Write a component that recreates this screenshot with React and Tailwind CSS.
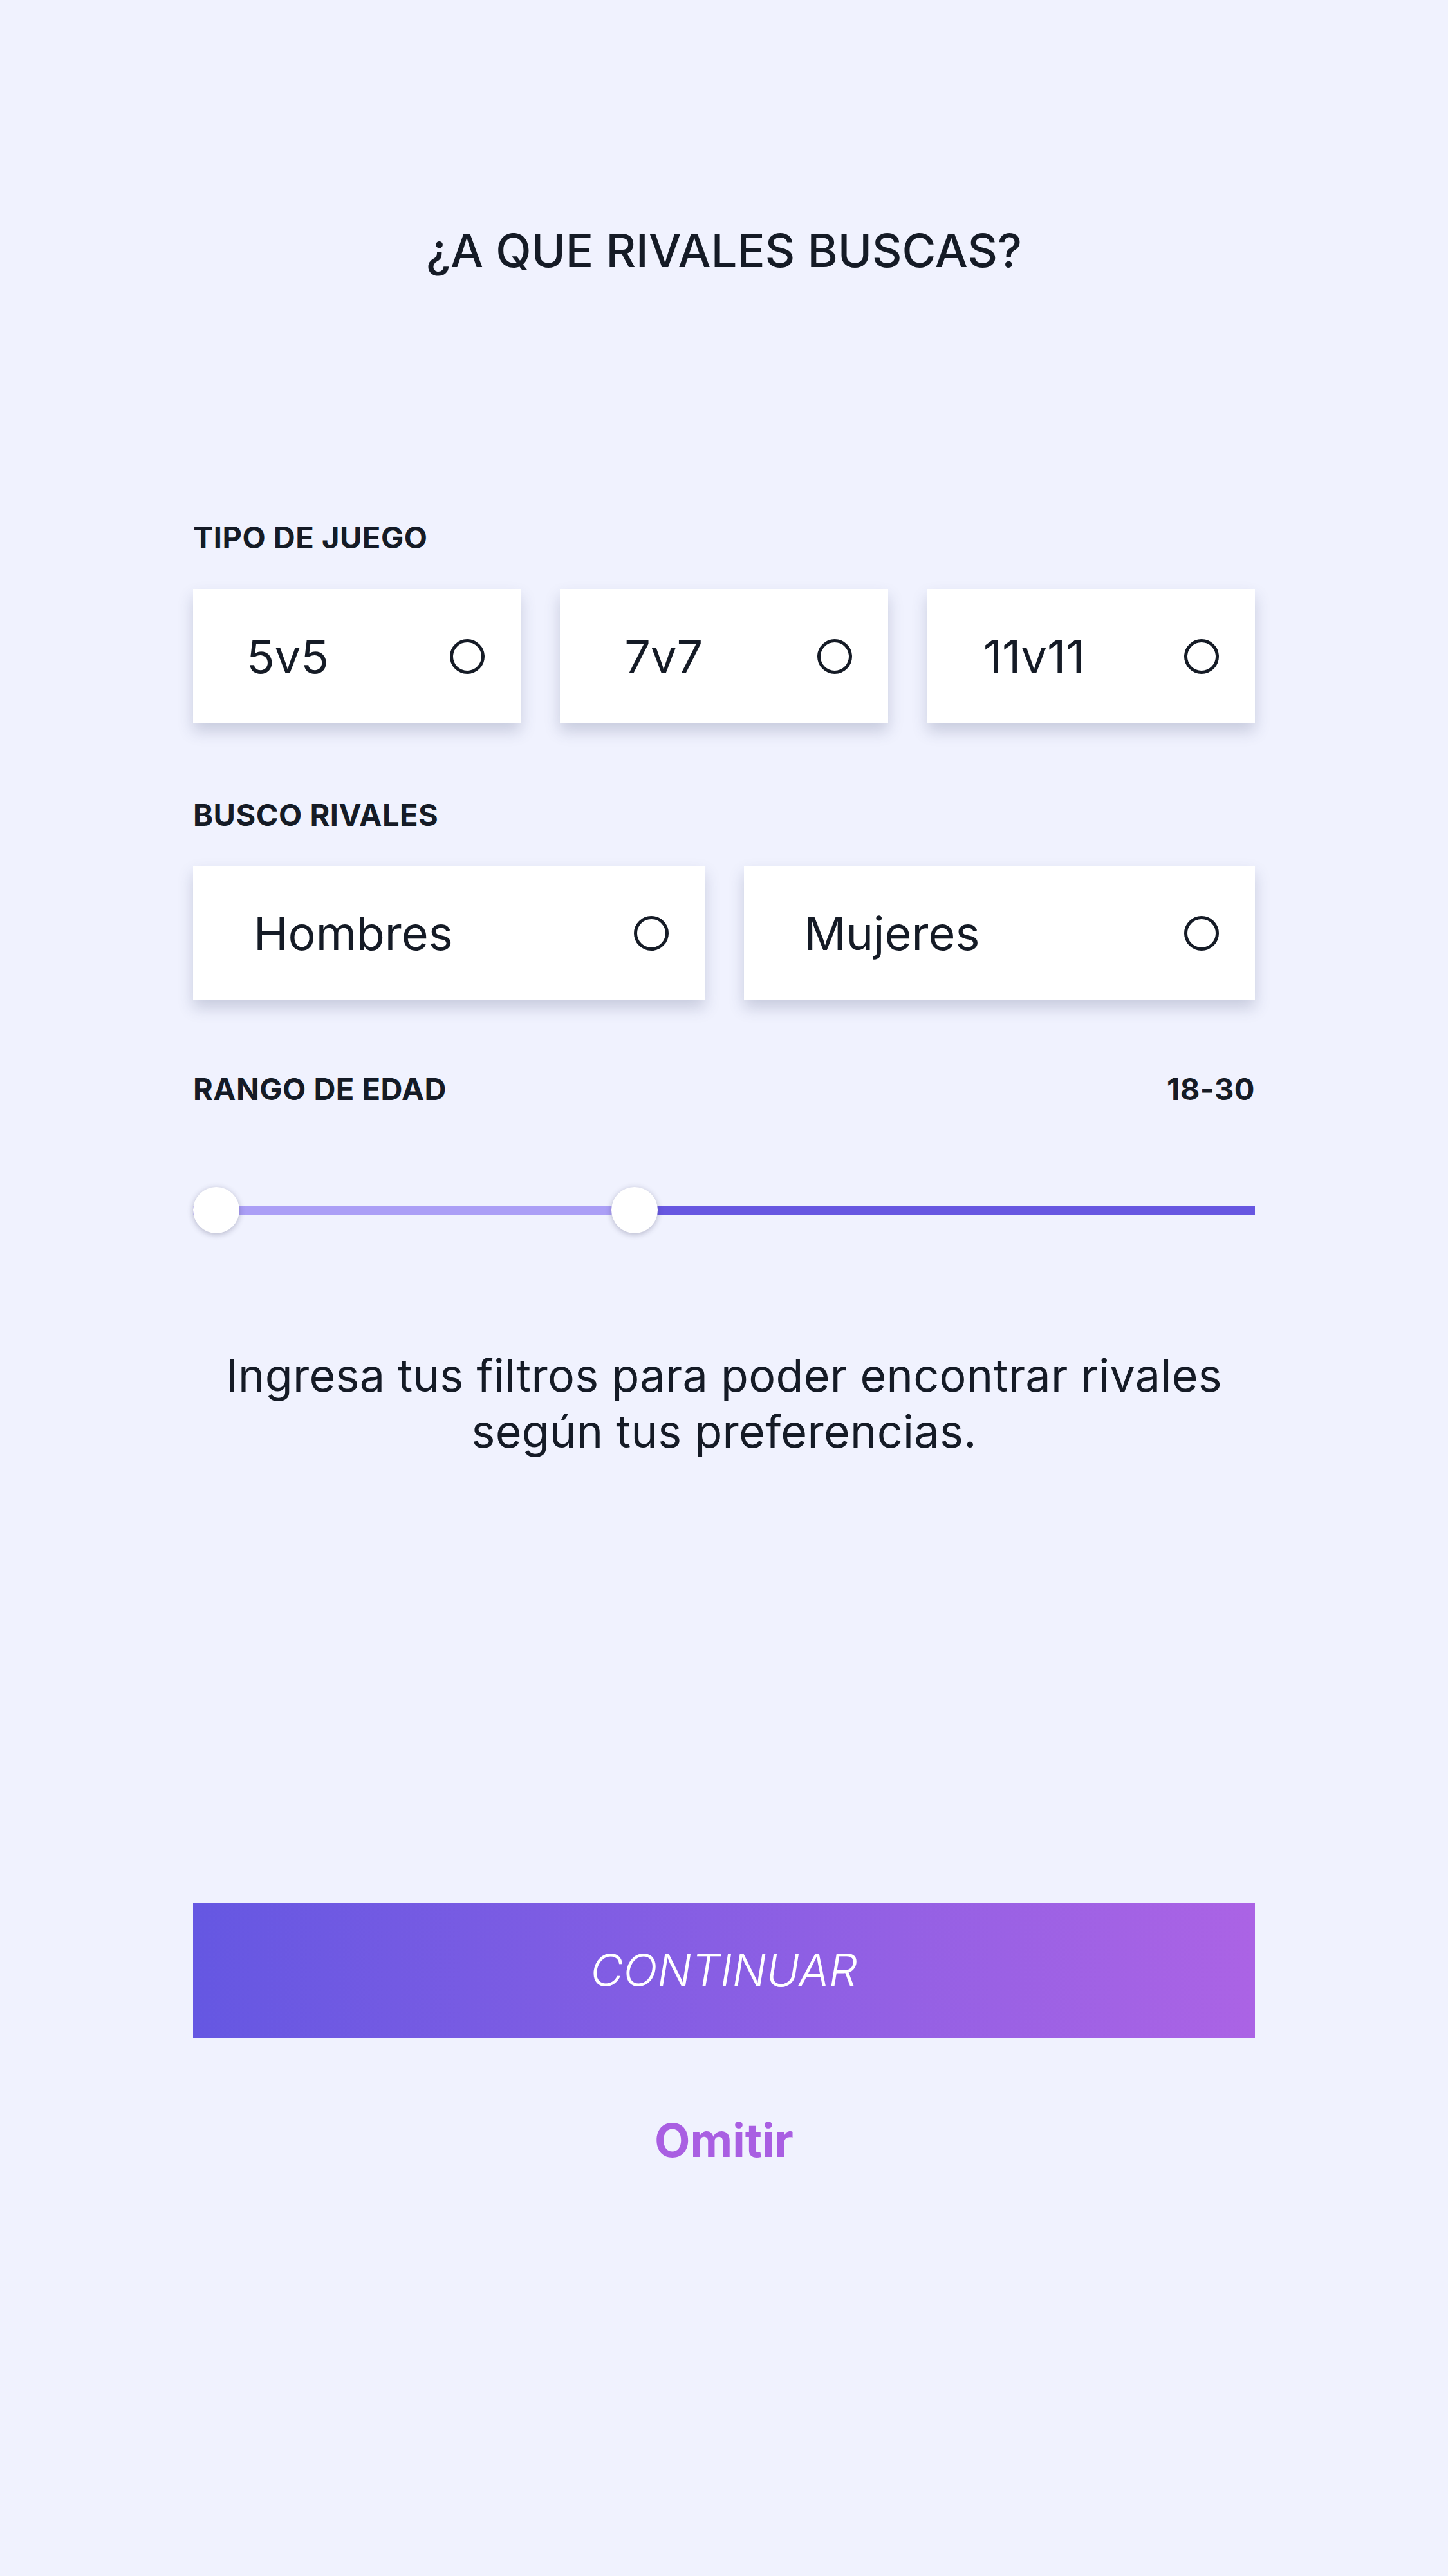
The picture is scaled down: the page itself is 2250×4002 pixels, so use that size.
const gameTypes = [
  { label: '5v5', pad: 'pl-[83px]' },
  { label: '7v7', pad: 'pl-[100px]' },
  { label: '11v11', pad: 'pl-[87px]' },
];

const genders = [
  { label: 'Hombres', pad: 'pl-[94px]' },
  { label: 'Mujeres', pad: 'pl-[94px]' },
];

function OptionCard({ label, pad }) {
  return (
    <button className={`h-[209px] bg-white flex items-center justify-between pr-[56px] ${pad} shadow-[0_12px_22px_rgba(60,70,110,0.22)] text-left`}>
      <span className="text-[72px] leading-none text-[#151b26]">{label}</span>
      <span className="w-[54px] h-[54px] rounded-full border-[5px] border-[#151b26] shrink-0" />
    </button>
  );
}

function SectionLabel({ children, className = '' }) {
  return (
    <p className={`text-[47px] leading-none font-bold tracking-[0.5px] text-[#151b26] ${className}`}>{children}</p>
  );
}

export default function App() {
  // Range thumbs sit at fixed places, as in the mock
  const low = 0.022;
  const high = 0.416;

  return (
    <div className="min-h-screen w-full bg-[#f0f2fe] font-['Inter',sans-serif]">
      <div className="w-[1650px] mx-auto pt-[353px] pb-[600px] flex flex-col">
        <h1 className="text-[72px] leading-none font-medium text-center text-[#151b26]">
          ¿A QUE RIVALES BUSCAS?
        </h1>

        {/* Tipo de juego */}
        <SectionLabel className="mt-[386px]">TIPO DE JUEGO</SectionLabel>
        <div className="mt-[57px] grid grid-cols-3 gap-[61px]">
          {gameTypes.map((g) => (
            <OptionCard key={g.label} {...g} />
          ))}
        </div>

        {/* Busco rivales */}
        <SectionLabel className="mt-[118px]">BUSCO RIVALES</SectionLabel>
        <div className="mt-[56px] grid grid-cols-2 gap-[61px]">
          {genders.map((g) => (
            <OptionCard key={g.label} {...g} />
          ))}
        </div>

        {/* Rango de edad */}
        <div className="mt-[114px] flex items-center justify-between">
          <SectionLabel>RANGO DE EDAD</SectionLabel>
          <SectionLabel>18-30</SectionLabel>
        </div>
        <div className="mt-[129px] relative h-[72px]">
          <div className="absolute left-0 right-0 top-[29px] h-[15px] bg-[#6757e1]" />
          <div
            className="absolute left-0 top-[29px] h-[15px] bg-[#ab9ff6]"
            style={{ width: `${high * 100}%` }}
          />
          <div
            className="absolute top-0 w-[72px] h-[72px] -ml-[36px] rounded-full bg-white shadow-[0_2px_10px_rgba(40,40,80,0.3)]"
            style={{ left: `${low * 100}%` }}
          />
          <div
            className="absolute top-0 w-[72px] h-[72px] -ml-[36px] rounded-full bg-white shadow-[0_2px_10px_rgba(40,40,80,0.3)]"
            style={{ left: `${high * 100}%` }}
          />
        </div>

        <p className="mt-[177px] text-[70px] leading-[87px] tracking-[0.3px] text-center text-[#151b26]">
          Ingresa tus filtros para poder encontrar rivales
          <br />
          según tus preferencias.
        </p>

        <button className="mt-[689px] h-[210px] w-full bg-gradient-to-r from-[#6557e2] to-[#ab63e5] text-white text-[70px] italic font-light leading-none">
          CONTINUAR
        </button>

        <button className="mt-[123px] self-center text-[72px] font-bold leading-none text-[#a95fe2]">
          Omitir
        </button>
      </div>
    </div>
  );
}
